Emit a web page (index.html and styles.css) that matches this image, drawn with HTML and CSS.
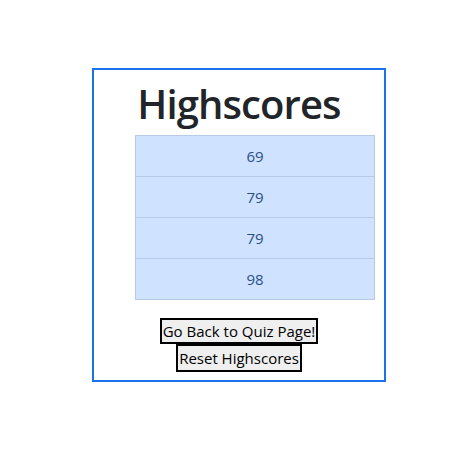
FILE: index.html
```html
<!DOCTYPE html>
<html>
<head>
<meta charset="utf-8">
<link rel="stylesheet" href="styles.css">
</head>
<body>
<div class="card">
  <h1 class="title">Highscores</h1>
  <ul class="scores">
    <li class="score">69</li>
    <li class="score">79</li>
    <li class="score">79</li>
    <li class="score">98</li>
  </ul>
  <div class="actions">
    <button class="btn">Go Back to Quiz Page!</button>
    <button class="btn">Reset Highscores</button>
  </div>
</div>
</body>
</html>
```
FILE: styles.css
```css
html, body {
  margin: 0;
  padding: 0;
  background: #ffffff;
}
body {
  padding: 68px 0 0 92px;
  font-family: "Open Sans", "Noto Sans", sans-serif;
}
.card {
  box-sizing: border-box;
  width: 294px;
  height: 314px;
  border: 2px solid #1a73e8;
  padding: 10px 0 0 0;
}
.title {
  margin: 0 0 7px 0;
  font-size: 40px;
  line-height: 48px;
  font-weight: 600;
  color: #212529;
  text-align: center;
  letter-spacing: -0.9px;
}
.scores {
  list-style: none;
  margin: 0 0 0 41px;
  padding: 0;
  width: 240px;
  box-sizing: border-box;
  border: 1px solid #b6cbe8;
  background: #cfe2ff;
}
.score {
  height: 40px;
  display: flex;
  align-items: center;
  justify-content: center;
  font-size: 15px;
  color: #2b4f8c;
}
.score + .score {
  border-top: 1px solid #b6cbe8;
}
.actions {
  margin-top: 18px;
  display: flex;
  flex-direction: column;
  align-items: center;
}
.btn {
  font-family: "Open Sans", "Noto Sans", sans-serif;
  font-size: 15px;
  line-height: 20px;
  padding: 1px 1px;
  border: 2px solid #000000;
  background: #efefef;
  color: #000000;
  border-radius: 0;
}
.btn + .btn {
  padding: 2px 1px;
}
```
